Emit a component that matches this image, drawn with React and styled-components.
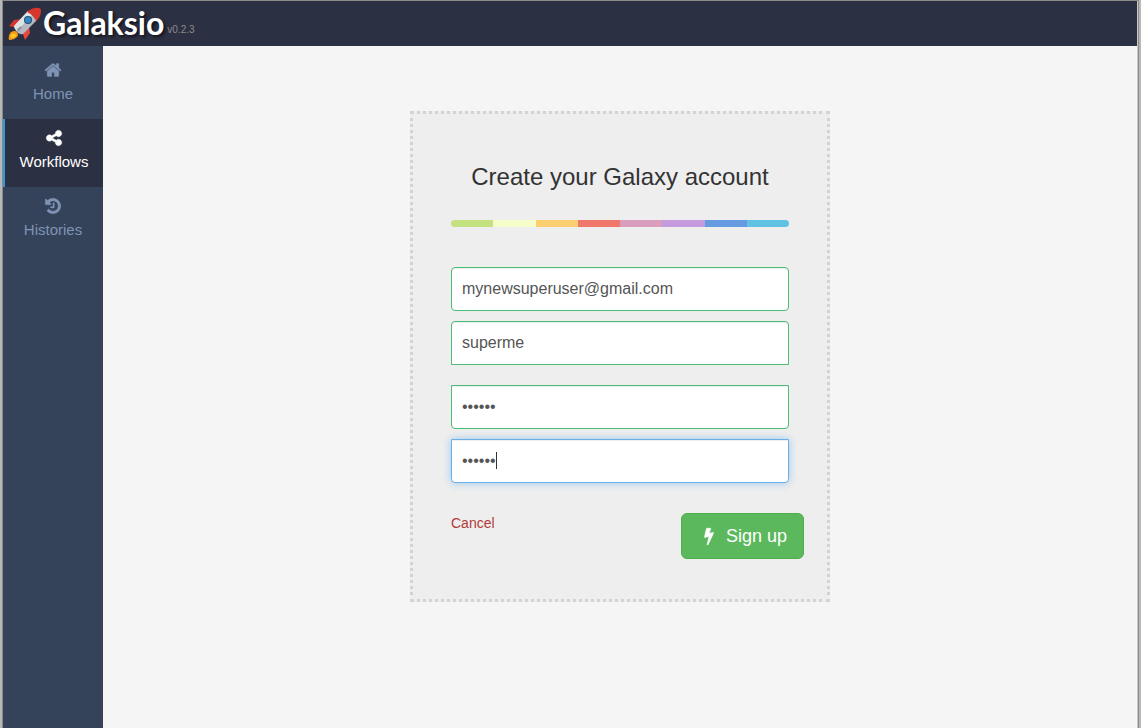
import React from "react";
import styled, { createGlobalStyle, css } from "styled-components";

const GlobalStyle = createGlobalStyle`
  *, *::before, *::after { box-sizing: border-box; }
  body {
    margin: 0;
    background: #f5f5f5;
    color: #333;
    font: 14px/20px "Liberation Sans", Arial, sans-serif;
  }
`;

const Frame = styled.div`
  border: solid #b8b8b6;
  border-width: 0 2px;
`;

const Page = styled.div`
  display: flex;
  flex-direction: column;
  min-height: 100vh;
  padding-right: 1px;
  background: #c9c9c9;
  border: 1px solid #8a8a88;
  border-bottom: 0;
`;

const Header = styled.header`
  display: flex;
  align-items: center;
  height: 45px;
  padding-left: 5px;
  background: #2c3043;
`;

const Rocket = styled.svg`
  width: 34px;
  height: 34px;
`;

const Brand = styled.span`
  margin: 0 0 2px 1px;
  color: #fff;
  font: 700 32px/40px Lato, sans-serif;
  text-shadow: 2px 2px 3px rgba(0, 0, 0, 0.6);
`;

const Version = styled.small`
  margin: 12px 0 0 3px;
  color: #8e8a8c;
  font-size: 10px;
  line-height: 14px;
`;

const Body = styled.div`
  display: flex;
  flex: 1;
  background: #f5f5f5;
`;

const Sidebar = styled.nav`
  flex: none;
  width: 100px;
  padding-top: 5px;
  background: #34435a;
`;

const NavLink = styled.a`
  display: flex;
  flex-direction: column;
  align-items: center;
  height: 68px;
  padding-top: 10px;
  color: #7f93b5;
  font-size: 15px;
  line-height: 20px;
  text-decoration: none;
  ${({ $active }) =>
    $active &&
    css`
      background: #2c3043;
      border-left: 2px solid #3498db;
      color: #fff;
    `}
`;

const Glyph = styled.svg`
  width: 18px;
  height: 18px;
  margin-bottom: 5px;
  fill: currentColor;
  stroke: currentColor;
  stroke-width: 40px;
`;

const Main = styled.main`
  flex: 1;
  padding: 65px 20px 20px;
`;

const Card = styled.form`
  max-width: 420px;
  margin: 0 auto;
  padding: 38px 38px 40px;
  background: #eee;
  border: 3px dotted #d3d3d3;
`;

const Title = styled.h1`
  margin: 10px 0 28px;
  font-size: 24px;
  font-weight: 400;
  line-height: 30px;
  text-align: center;
`;

const Rainbow = styled.div`
  display: flex;
  height: 7px;
  margin-bottom: 40px;
  overflow: hidden;
  border-radius: 4px;
`;

const Stripe = styled.span`
  flex: 1;
  background: ${({ $color }) => $color};
`;

const FieldGroup = styled.div`
  display: grid;
  gap: 10px;
  margin-bottom: ${({ $last }) => ($last ? 30 : 20)}px;
`;

const Field = styled.div`
  position: relative;
  display: flex;
`;

const Caret = styled.span`
  position: absolute;
  top: 13px;
  left: 45px;
  width: 1px;
  height: 17px;
  background: #333;
  pointer-events: none;
`;

const radii = { all: "4px", top: "4px 4px 0 0", bottom: "0 0 4px 4px" };

const Input = styled.input`
  width: 100%;
  height: 44px;
  padding: 10px;
  background: #fff;
  border: 1px solid #4cbb74;
  border-radius: ${({ $round }) => radii[$round]};
  box-shadow: inset 0 1px 1px rgba(0, 0, 0, 0.075);
  color: #555;
  font: 16px/22px "Liberation Sans", Arial, sans-serif;
  &:focus {
    border-color: #66afe9;
    outline: 0;
    box-shadow: inset 0 1px 1px rgba(0, 0, 0, 0.075), 0 0 8px rgba(102, 175, 233, 0.6);
    caret-color: transparent;
  }
  &:not(:focus) + ${Caret} {
    display: none;
  }
`;

const Actions = styled.div`
  display: flex;
  align-items: flex-start;
  justify-content: space-between;
  margin-right: -15px;
`;

const Cancel = styled.a`
  color: #b03a37;
  text-decoration: none;
`;

const SignUp = styled.button`
  display: flex;
  align-items: center;
  height: 46px;
  padding: 0 16px 0 18px;
  background: #5cb85c;
  border: 1px solid #4cae4c;
  border-radius: 6px;
  color: #fff;
  font: 18px/24px "Liberation Sans", Arial, sans-serif;
`;

const Bolt = styled.svg`
  width: 18px;
  height: 18px;
  margin-right: 8px;
  fill: currentColor;
  stroke: currentColor;
  stroke-width: 70px;
`;

const homePath =
  "M1472 992v480q0 26-19 45t-45 19h-384v-384h-256v384h-384q-26 0-45-19t-19-45v-480q0-1 .5-3t.5-3l575-474 575 474q1 2 1 6zm223-69l-62 74q-8 9-21 11h-3q-13 0-21-7l-692-577-692 577q-12 8-24 7-13-2-21-11l-62-74q-8-10-7-23.5t11-21.500l719-599q32-26 76-26t76 26l244 204v-195q0-14 9-23t23-9h192q14 0 23 9t9 23v408l219 182q10 8 11 21.500t-7 23.500z";
const sharePath =
  "M1344 1024q133 0 226.500 93.500t93.500 226.500-93.500 226.500-226.500 93.500-226.500-93.500-93.500-226.500q0-12 2-34l-360-180q-92 86-218 86-133 0-226.500-93.500t-93.500-226.500 93.500-226.500 226.500-93.500q126 0 218 86l360-180q-2-22-2-34 0-133 93.500-226.500t226.500-93.500 226.500 93.500 93.500 226.500-93.500 226.500-226.500 93.500q-126 0-218-86l-360 180q2 22 2 34t-2 34l360 180q92-86 218-86z";
const historyPath =
  "M1664 896q0 156-61 298t-164 245-245 164-298 61q-172 0-327-72.500t-264-204.500q-7-10-6.500-22.500t8.500-20.500l137-138q10-9 25-9 16 2 23 12 73 95 179 147t225 52q104 0 198.500-40.500t163.500-109.500 109.500-163.500 40.500-198.500-40.500-198.500-109.500-163.500-163.500-109.500-198.500-40.500q-98 0-188 35.500t-160 101.500l137 138q31 30 14 69-17 40-59 40h-448q-26 0-45-19t-19-45v-448q0-42 40-59 39-17 69 14l130 129q107-101 244.500-156.500t284.500-55.500q156 0 298 61t245 164 164 245 61 298zm-640-288v448q0 14-9 23t-23 9h-320q-14 0-23-9t-9-23v-64q0-14 9-23t23-9h224v-352q0-14 9-23t23-9h64q14 0 23 9t9 23z";
const boltPath =
  "M1333 566q18 20 7 44l-540 1157q-13 25-42 25-4 0-14-2-17-5-25.500-19t-4.500-30l197-808-406 101q-4 1-12 1-18 0-31-11-18-15-13-39l201-825q4-14 16-23t28-9h328q19 0 32 12.500t13 29.500q0 8-5 18l-171 463 396-98q8-2 12-2 19 0 34 15z";

const links = [
  { label: "Home", path: homePath },
  { label: "Workflows", path: sharePath, active: true },
  { label: "Histories", path: historyPath },
];

const stripes = ["#c4e17f", "#f7fdca", "#fecf71", "#f0776c", "#db9dbe", "#c49cde", "#669ae1", "#62c2e4"];

export default function App() {
  return (
    <>
      <GlobalStyle />
      <Frame>
        <Page>
          <Header>
            <Rocket viewBox="0 0 34 34" aria-hidden="true">
              <path d="M14 12 6 13 1 19l9 2z" fill="#d8352c" />
              <path d="m21 20 1 6-5 7-3-9z" fill="#e8483e" />
              <path d="M1 33q-1-5 2-8 4-2 6 0 2 3 0 5-3 3-8 3z" fill="#f79a16" />
              <path d="M3 31q-1-3 1-4 3-1 4 1 0 3-5 3z" fill="#ffc928" />
              <path d="M6 19 20 4l9 9-14 14q-3 1-6-2t-3-6z" fill="#b4bac1" />
              <path d="M6 19 20 4l4 4L9 24q-3-3-3-5z" fill="#dfe2e5" />
              <path d="M19 5q6-5 12-4 2 0 2 3 0 6-5 10-2-6-9-9z" fill="#d8352c" />
              <path d="m9 22 4-3 1 2-4 4z" fill="#8f979f" />
              <circle cx="20" cy="13" r="4" fill="#244f73" />
              <circle cx="20" cy="13" r="3" fill="#3486c4" />
            </Rocket>
            <Brand>Galaksio</Brand>
            <Version>v0.2.3</Version>
          </Header>
          <Body>
            <Sidebar>
              {links.map(({ label, path, active }) => (
                <NavLink key={label} href="#" $active={active}>
                  <Glyph viewBox="0 0 1792 1792" aria-hidden="true">
                    <path d={path} />
                  </Glyph>
                  {label}
                </NavLink>
              ))}
            </Sidebar>
            <Main>
              <Card>
                <Title>Create your Galaxy account</Title>
                <Rainbow>
                  {stripes.map((color) => (
                    <Stripe key={color} $color={color} />
                  ))}
                </Rainbow>
                <FieldGroup>
                  <Field>
                    <Input type="email" aria-label="Email" defaultValue="mynewsuperuser@gmail.com" $round="all" />
                  </Field>
                  <Field>
                    <Input type="text" aria-label="Username" defaultValue="superme" $round="top" />
                  </Field>
                </FieldGroup>
                <FieldGroup $last>
                  <Field>
                    <Input type="password" aria-label="Password" defaultValue="secret" $round="bottom" />
                  </Field>
                  <Field>
                    <Input
                      type="password"
                      aria-label="Confirm password"
                      defaultValue="secret"
                      $round="bottom"
                      autoFocus
                    />
                    <Caret />
                  </Field>
                </FieldGroup>
                <Actions>
                  <Cancel href="#">Cancel</Cancel>
                  <SignUp type="button">
                    <Bolt viewBox="0 0 1792 1792" aria-hidden="true">
                      <path d={boltPath} />
                    </Bolt>
                    Sign up
                  </SignUp>
                </Actions>
              </Card>
            </Main>
          </Body>
        </Page>
      </Frame>
    </>
  );
}
